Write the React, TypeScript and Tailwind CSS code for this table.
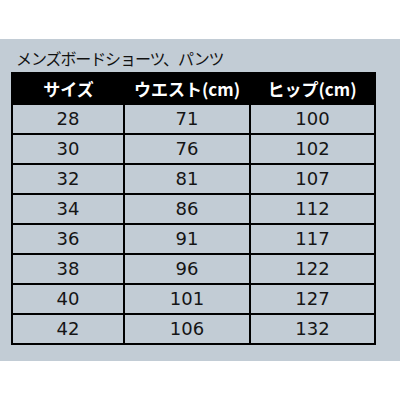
import React from "react";

// Size chart rows: size, waist, hip
const rows: [number, number, number][] = [
  [28, 71, 100],
  [30, 76, 102],
  [32, 81, 107],
  [34, 86, 112],
  [36, 91, 117],
  [38, 96, 122],
  [40, 101, 127],
  [42, 106, 132],
];

const jp = { fontFamily: '"Noto Sans CJK JP", "Noto Sans", sans-serif' };
const num = { fontFamily: '"DejaVu Sans", "Noto Sans", sans-serif' };

export default function App() {
  return (
    <div className="w-[400px] h-[400px] bg-white pt-[39px]">
      <div className="h-[322px] bg-[#c2ccd5] px-[11px]">
        <div className="h-[33px] flex items-center pl-[5px] pt-[4px]">
          <h1 className="text-[16px] tracking-[-1.1px] text-[#111111] font-normal leading-none" style={jp}>
            メンズボードショーツ、パンツ
          </h1>
        </div>
        <table className="w-[363px] table-fixed border-collapse border-2 border-black">
          <colgroup>
            <col className="w-[112px]" />
            <col className="w-[126px]" />
            <col className="w-[125px]" />
          </colgroup>
          <thead>
            <tr className="h-[31px] bg-black text-white">
              <th className="text-[17px] font-bold leading-none" style={jp}>サイズ</th>
              <th className="text-[17px] font-bold leading-none" style={jp}>ウエスト(cm)</th>
              <th className="text-[17px] font-bold leading-none" style={jp}>ヒップ(cm)</th>
            </tr>
          </thead>
          <tbody>
            {rows.map((r) => (
              <tr key={r[0]} className="h-[30px]">
                {r.map((v, i) => (
                  <td
                    key={i}
                    className="border-2 border-black text-center text-[18px] text-[#151515] leading-none"
                    style={num}
                  >
                    {v}
                  </td>
                ))}
              </tr>
            ))}
          </tbody>
        </table>
      </div>
    </div>
  );
}
